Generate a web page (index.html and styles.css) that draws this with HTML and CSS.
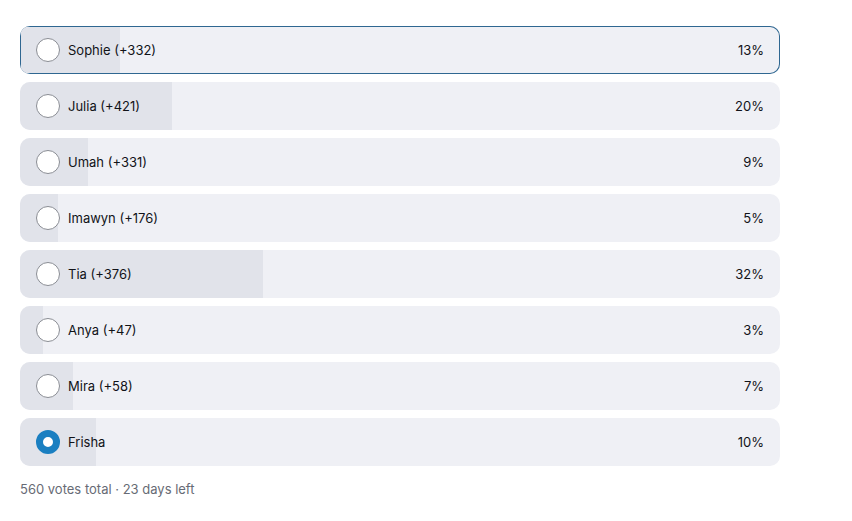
FILE: index.html
```html
<!DOCTYPE html>
<html>
<head>
<meta charset="utf-8">
<link rel="stylesheet" href="styles.css">
</head>
<body>
<div class="poll">
  <div class="options">
    <div class="option focused"><div class="fill" style="width:13%"></div><span class="radio"></span><span class="label">Sophie (+332)</span><span class="pct">13%</span></div>
    <div class="option"><div class="fill" style="width:20%"></div><span class="radio"></span><span class="label">Julia (+421)</span><span class="pct">20%</span></div>
    <div class="option"><div class="fill" style="width:9%"></div><span class="radio"></span><span class="label">Umah (+331)</span><span class="pct">9%</span></div>
    <div class="option"><div class="fill" style="width:5%"></div><span class="radio"></span><span class="label">Imawyn (+176)</span><span class="pct">5%</span></div>
    <div class="option"><div class="fill" style="width:32%"></div><span class="radio"></span><span class="label">Tia (+376)</span><span class="pct">32%</span></div>
    <div class="option"><div class="fill" style="width:3%"></div><span class="radio"></span><span class="label">Anya (+47)</span><span class="pct">3%</span></div>
    <div class="option"><div class="fill" style="width:7%"></div><span class="radio"></span><span class="label">Mira (+58)</span><span class="pct">7%</span></div>
    <div class="option"><div class="fill" style="width:10%"></div><span class="radio checked"></span><span class="label">Frisha</span><span class="pct">10%</span></div>
  </div>
  <div class="meta">560 votes total · 23 days left</div>
</div>
</body>
</html>
```
FILE: styles.css
```css
html, body {
  margin: 0;
  padding: 0;
  background: #ffffff;
}
body {
  font-family: Inter, "Noto Sans", sans-serif;
  color: #111318;
}
.poll {
  padding: 26px 72px 0 20px;
  width: 760px;
}
.options {
  display: flex;
  flex-direction: column;
  gap: 8px;
}
.option {
  position: relative;
  height: 48px;
  box-sizing: border-box;
  border-radius: 10px;
  background: #eff0f5;
  display: flex;
  align-items: center;
  padding: 0 16px;
  overflow: hidden;
  font-size: 13px;
  line-height: 16px;
}
.option.focused {
  box-shadow: inset 0 0 0 1px #2f6791;
}
.fill {
  position: absolute;
  left: 0;
  top: 0;
  bottom: 0;
  background: #e1e3ea;
}
.option.focused .fill {
  top: 1px;
  bottom: 1px;
  left: 1px;
}
.radio {
  position: relative;
  width: 24px;
  height: 24px;
  box-sizing: border-box;
  border-radius: 50%;
  border: 1px solid #8a8d94;
  background: #ffffff;
  flex: none;
}
.radio.checked {
  border: 7px solid #1a7fc1;
  background: #ffffff;
}
.label {
  position: relative;
  margin-left: 8px;
  flex: 1;
  margin-top: -1px;
}
.pct {
  position: relative;
  margin-top: -1px;
}
.meta {
  margin-top: 15px;
  font-size: 13px;
  line-height: 16px;
  color: #676b75;
}
```
